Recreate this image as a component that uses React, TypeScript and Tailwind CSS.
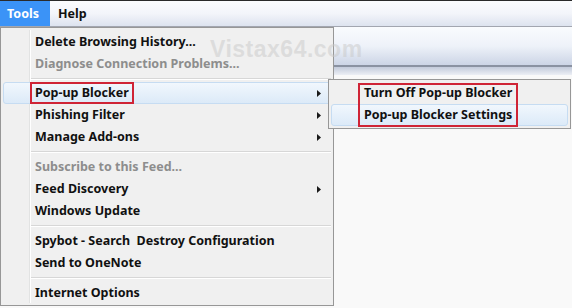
import React from 'react';

type Item =
    | { kind: 'sep'; gap: string }
    | { kind: 'item'; label: string; disabled?: boolean; sub?: boolean; active?: boolean };

const items: Item[] = [
    { kind: 'item', label: 'Delete Browsing History...' },
    { kind: 'item', label: 'Diagnose Connection Problems...', disabled: true },
    { kind: 'sep', gap: 'mt-[3px] mb-[2px]' },
    { kind: 'item', label: 'Pop-up Blocker', sub: true, active: true },
    { kind: 'item', label: 'Phishing Filter', sub: true },
    { kind: 'item', label: 'Manage Add-ons', sub: true },
    { kind: 'sep', gap: 'mt-[3px] mb-[3px]' },
    { kind: 'item', label: 'Subscribe to this Feed...', disabled: true },
    { kind: 'item', label: 'Feed Discovery', sub: true },
    { kind: 'item', label: 'Windows Update' },
    { kind: 'sep', gap: 'mt-[3px] mb-[3px]' },
    { kind: 'item', label: 'Spybot - Search  Destroy Configuration' },
    { kind: 'item', label: 'Send to OneNote' },
    { kind: 'sep', gap: 'mt-[3px] mb-[3px]' },
    { kind: 'item', label: 'Internet Options' },
];

const activeRow = 'rounded-[3px] border border-[#c6dcf2] bg-gradient-to-b from-[#f1f7fd] to-[#dceaf8]';

function Row({ label, disabled, sub, active }: { label: string; disabled?: boolean; sub?: boolean; active?: boolean }) {
    return (
        <div className={`h-[22px] flex items-center ml-[2px] mr-[1px] pr-[10px] ${active ? activeRow : 'border border-transparent'}`}>
            <span className={`ml-[31px] whitespace-pre ${disabled ? 'text-[#8d8d8d]' : 'text-[#111]'}`}>{label}</span>
            {sub && (
                <svg width="4" height="7" viewBox="0 0 4 7" className="ml-auto">
                    <path d="M0 0 L4 3.5 L0 7 Z" fill="#1a1a1a" />
                </svg>
            )}
        </div>
    );
}

export default function App() {
    return (
        <div
            className="relative w-[572px] h-[308px] overflow-hidden bg-[#f9f9f9] text-[12.5px] font-bold"
            style={{ fontFamily: '"Noto Sans", "Open Sans", sans-serif' }}
        >
            {/* window chrome behind the menus */}
            <div className="flex flex-col">
                <div className="h-[1px] bg-[#2a2a2a]" />
                <div className="h-[25px] flex items-stretch bg-gradient-to-b from-[#fbfcfe] via-[#f3f5fa] to-[#dde3ef]">
                    <div className="w-[50px] bg-[#3b93f7] text-white flex items-center pl-[7px] pt-[1px]">Tools</div>
                    <div className="flex items-center pl-[8px] text-[#111] pt-[1px]">Help</div>
                </div>
                <div className="h-[1px] bg-[#a2a6b0]" />
                <div className="h-[38px] bg-gradient-to-b from-[#f9fbfe] via-[#eef2f9] to-[#ccd5e6]" />
                <div className="h-[2px] bg-[#8a92a2]" />
                <div className="h-[8px] bg-gradient-to-b from-[#c3cbdb] to-[#eceff5]" />
            </div>

            {/* main Tools menu */}
            <div className="absolute left-0 top-[27px] w-[334px] h-[279px] border border-[#979797] bg-[#f0f0f0] pt-[3px]">
                <div className="absolute left-[28px] top-[2px] bottom-[2px] w-[1px] bg-[#e2e3e3]" />
                <div className="absolute left-[29px] top-[2px] bottom-[2px] w-[1px] bg-white" />
                <div className="relative flex flex-col">
                    {items.map((it, i) =>
                        it.kind === 'sep' ? (
                            <div key={i} className={`${it.gap} ml-[30px] mr-[2px] h-[2px] border-t border-[#d7d7d7] border-b border-b-white`} />
                        ) : (
                            <Row key={i} label={it.label} disabled={it.disabled} sub={it.sub} active={it.active} />
                        )
                    )}
                </div>
            </div>

            {/* Pop-up Blocker submenu */}
            <div className="absolute left-[328px] top-[79px] w-[243px] h-[50px] border border-[#979797] bg-[#f0f0f0] pt-[2px] px-[2px] flex flex-col">
                <div className="h-[22px] flex items-center pl-[32px] border border-transparent text-[#111]">Turn Off Pop-up Blocker</div>
                <div className={`h-[22px] flex items-center pl-[32px] text-[#111] ${activeRow}`}>Pop-up Blocker Settings</div>
            </div>

            {/* annotation boxes */}
            <div className="absolute left-[30px] top-[82px] w-[104px] h-[22px] border-2 border-[#cf2436]" />
            <div className="absolute left-[358px] top-[83px] w-[160px] h-[44px] border-2 border-[#cf2436]" />

            {/* watermark */}
            <div
                className="absolute left-[210px] top-[32px] text-[23px] font-bold text-[#c8c8c8]/50 tracking-[0.5px]"
                style={{ fontFamily: '"Liberation Sans", sans-serif' }}
            >
                Vistax64.com
            </div>
        </div>
    );
}
